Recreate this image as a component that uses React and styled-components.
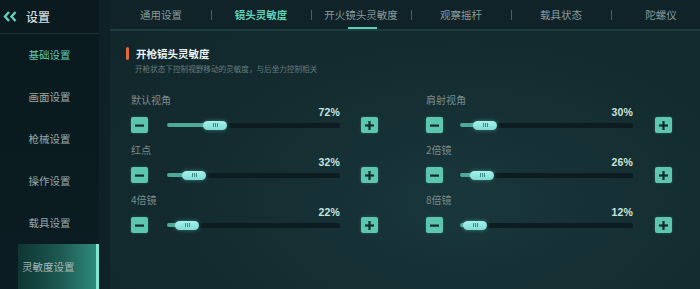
import React from "react";
import styled, { createGlobalStyle } from "styled-components";

const Global = createGlobalStyle`
  html, body { margin: 0; padding: 0; background: #0b1a1f; }
  #root { width: 700px; height: 289px; overflow: hidden; }
  * { box-sizing: border-box; }
`;

const CJK = `"Noto Sans CJK SC", "Noto Sans", sans-serif`;

const Screen = styled.div`
  width: 700px;
  height: 289px;
  display: flex;
  font-family: ${CJK};
  background: #0b1a1f;
  overflow: hidden;
`;

const Sidebar = styled.nav`
  width: 99px;
  flex-shrink: 0;
  display: flex;
  flex-direction: column;
  background: linear-gradient(180deg, #0a1a1f 0%, #0b1d22 100%);
`;

const SideHeader = styled.div`
  height: 34px;
  display: flex;
  align-items: center;
  gap: 9px;
  padding-left: 3px;
  border-bottom: 1px solid #1c3135;
  color: #d3dcdc;
  font-size: 12px;
  font-weight: 500;
`;

const SideItem = styled.div`
  height: 42px;
  display: flex;
  align-items: center;
  justify-content: center;
  white-space: nowrap;
  font-size: 10.5px;
  color: ${(p) => (p.$accent ? "#5cc9b0" : "#9aa7a9")};
  ${(p) =>
    p.$active &&
    `
    margin-left: 18px;
    margin-top: 1px;
    height: 45px;
    justify-content: flex-start;
    padding-left: 4px;
    color: #a9b8b8;
    background: linear-gradient(90deg, #0f3533 0%, #1d5a52 55%, #2f8a7b 100%);
    border-right: 3px solid #7fe6cf;
  `}
`;

const Gutter = styled.div`
  width: 11px;
  flex-shrink: 0;
  background: #0e2126;
`;

const Main = styled.main`
  flex: 1;
  min-width: 0;
  overflow: hidden;
  display: flex;
  flex-direction: column;
  background: radial-gradient(ellipse at 60% 70%, #19373b 0%, #142d31 45%, #10252a 100%);
`;

const TabBar = styled.div`
  height: 31px;
  flex-shrink: 0;
  display: flex;
  padding-left: 1px;
  background: #0f2328;
  border-bottom: 2px solid #1d3d41;
`;

const Tab = styled.div`
  position: relative;
  width: 100px;
  flex-shrink: 0;
  display: flex;
  align-items: center;
  justify-content: center;
  font-size: 10.5px;
  white-space: nowrap;
  color: ${(p) => (p.$active ? "#62d2b8" : "#8a9a9c")};
  font-weight: ${(p) => (p.$active ? 600 : 400)};
  &::before {
    content: "";
    display: ${(p) => (p.$first ? "none" : "block")};
    position: absolute;
    left: 0;
    top: 10px;
    width: 1px;
    height: 10px;
    background: #4a6063;
  }
  &::after {
    content: "";
    display: ${(p) => (p.$underline ? "block" : "none")};
    position: absolute;
    left: 37px;
    bottom: 0;
    width: 29px;
    height: 2px;
    background: #5cd0bd;
  }
`;

const Content = styled.section`
  padding: 14px 0 0 16px;
  display: flex;
  flex-direction: column;
`;

const SectionTitle = styled.div`
  display: flex;
  align-items: center;
  gap: 7px;
  height: 16px;
  color: #eef2f2;
  font-size: 10.5px;
  font-weight: 700;
`;

const OrangeBar = styled.span`
  width: 3px;
  height: 13px;
  border-radius: 2px;
  background: #e4693d;
`;

const SubTitle = styled.div`
  margin-top: 1px;
  padding-left: 9px;
  font-size: 7.6px;
  color: #667b7e;
  line-height: 14px;
`;

const Grid = styled.div`
  margin-top: 18px;
  padding-left: 5px;
  display: grid;
  grid-template-columns: 247px 246px;
  column-gap: 48px;
  row-gap: 11px;
`;

const Block = styled.div`
  display: flex;
  flex-direction: column;
`;

const Label = styled.div`
  height: 13px;
  line-height: 12px;
  font-size: 10px;
  color: #7b8b8d;
`;

const Controls = styled.div`
  display: flex;
  align-items: flex-end;
`;

const StepButton = styled.div`
  width: 17px;
  height: 16px;
  border-radius: 2px;
  background: #5cc6ae;
  display: flex;
  align-items: center;
  justify-content: center;
  flex-shrink: 0;
  box-shadow: 0 0 3px rgba(92, 198, 174, 0.3);
`;

const TrackCol = styled.div`
  flex: 1;
  margin: ${(p) => (p.$right ? "0 22px 0 17px" : "0 21px 0 19px")};
  display: flex;
  flex-direction: column;
`;

const Percent = styled.div`
  height: 10px;
  line-height: 10px;
  text-align: right;
  font-family: "Liberation Sans", Arial, sans-serif;
  font-weight: 700;
  font-size: 10.5px;
  color: #c9e4df;
  letter-spacing: 0.2px;
`;

const TrackArea = styled.div`
  height: 16px;
  display: flex;
  align-items: center;
`;

const Fill = styled.div`
  height: 4px;
  flex-shrink: 0;
  border-radius: 2px 0 0 2px;
  background: #4ea898;
  margin-right: -2px;
`;

const Thumb = styled.div`
  width: 24px;
  height: 9px;
  flex-shrink: 0;
  border-radius: 5px;
  background: linear-gradient(180deg, #a6f2ea 0%, #7fdcd4 100%);
  box-shadow: 0 0 4px rgba(120, 220, 210, 0.45);
  display: flex;
  align-items: center;
  justify-content: center;
  gap: 1px;
  position: relative;
  z-index: 1;
`;

const Groove = styled.span`
  width: 1px;
  height: 4px;
  background: #3b8a84;
`;

const Rail = styled.div`
  flex: 1;
  height: 5px;
  margin-left: -2px;
  border-radius: 0 2px 2px 0;
  background: #0c1c20;
`;

const Chevrons = () => (
  <svg width="14" height="11" viewBox="0 0 14 11">
    <path d="M6 1 L2 5.5 L6 10" stroke="#5fd4bc" strokeWidth="2.4" fill="none" strokeLinejoin="miter" />
    <path d="M12.5 1 L8.5 5.5 L12.5 10" stroke="#5fd4bc" strokeWidth="2.4" fill="none" strokeLinejoin="miter" />
  </svg>
);

const Minus = () => (
  <svg width="11" height="11" viewBox="0 0 11 11">
    <rect x="1" y="4.5" width="9" height="2.2" fill="#0f2a2a" />
  </svg>
);

const Plus = () => (
  <svg width="11" height="11" viewBox="0 0 11 11">
    <rect x="1" y="4.4" width="9" height="2.2" fill="#0f2a2a" />
    <rect x="4.4" y="1" width="2.2" height="9" fill="#0f2a2a" />
  </svg>
);

const sliders = [
  { label: "默认视角", value: "72%", pos: 36 },
  { label: "肩射视角", value: "30%", pos: 13, right: true },
  { label: "红点", value: "32%", pos: 15 },
  { label: "2倍镜", value: "26%", pos: 10, right: true },
  { label: "4倍镜", value: "22%", pos: 8 },
  { label: "8倍镜", value: "12%", pos: 3, right: true },
];

const tabs = ["通用设置", "镜头灵敏度", "开火镜头灵敏度", "观察摇杆", "载具状态", "陀螺仪"];
const menu = ["基础设置", "画面设置", "枪械设置", "操作设置", "载具设置"];

const Slider = ({ label, value, pos, right }) => (
  <Block>
    <Label>{label}</Label>
    <Controls>
      <StepButton><Minus /></StepButton>
      <TrackCol $right={right}>
        <Percent>{value}</Percent>
        <TrackArea>
          <Fill style={{ width: pos + 2 }} />
          <Thumb>
            <Groove /><Groove /><Groove />
          </Thumb>
          <Rail />
        </TrackArea>
      </TrackCol>
      <StepButton><Plus /></StepButton>
    </Controls>
  </Block>
);

export default function App() {
  return (
    <>
      <Global />
      <Screen>
        <Sidebar>
          <SideHeader>
            <Chevrons />
            <span>设置</span>
          </SideHeader>
          {menu.map((m, i) => (
            <SideItem key={m} $accent={i === 0}>{m}</SideItem>
          ))}
          <SideItem $active>灵敏度设置</SideItem>
        </Sidebar>
        <Gutter />
        <Main>
          <TabBar>
            {tabs.map((t, i) => (
              <Tab key={t} $first={i === 0} $active={i === 1} $underline={i === 2}>{t}</Tab>
            ))}
          </TabBar>
          <Content>
            <SectionTitle>
              <OrangeBar />
              开枪镜头灵敏度
            </SectionTitle>
            <SubTitle>开枪状态下控制视野移动的灵敏度，与后坐力控制相关</SubTitle>
            <Grid>
              {sliders.map((s) => (
                <Slider key={s.label} {...s} />
              ))}
            </Grid>
          </Content>
        </Main>
      </Screen>
    </>
  );
}
